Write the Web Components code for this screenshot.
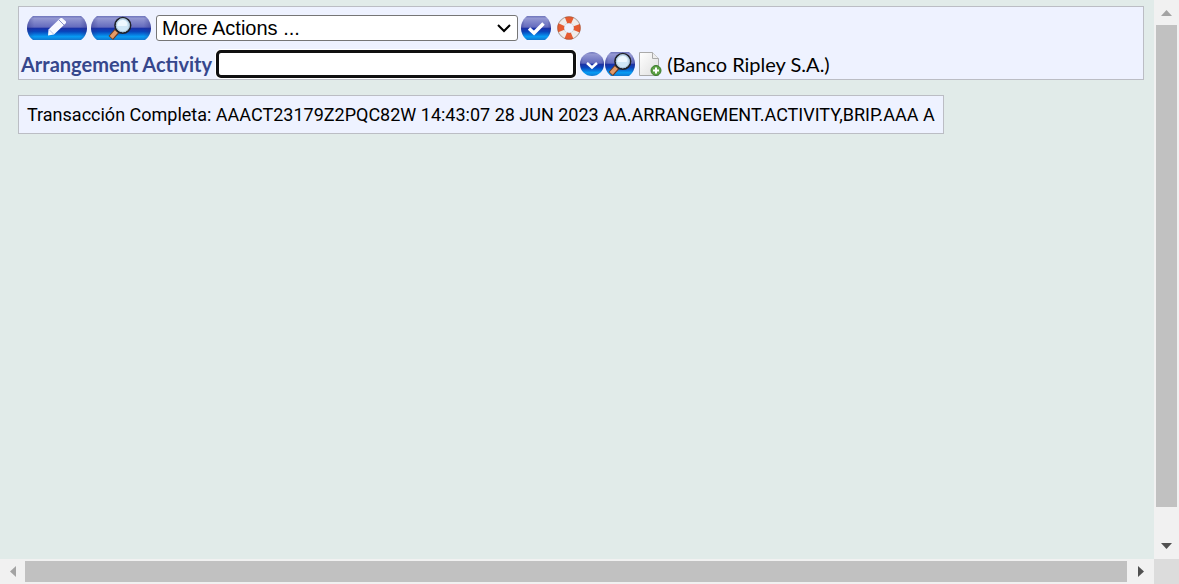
<!DOCTYPE html>
<html lang="es">
<head>
<meta charset="utf-8">
<title>Arrangement Activity</title>
<style>
html, body { height: 100%; margin: 0; }
body { overflow: hidden; background: #e1ebe9; color: #000; font: 20px/24px Lato, sans-serif; }
</style>
</head>
<body>
<app-window>
  <tool-panel>
    <action-bar slot="actions"></action-bar>
    <activity-field slot="field"></activity-field>
  </tool-panel>
  <status-message>Transacción Completa: AAACT23179Z2PQC82W 14:43:07 28 JUN 2023 AA.ARRANGEMENT.ACTIVITY,BRIP.AAA A</status-message>
</app-window>
<script>
const define = (name, html, init) => customElements.define(name, class extends HTMLElement {
  constructor() {
    super();
    this.attachShadow({ mode: 'open' }).innerHTML = html;
  }
  connectedCallback() { if (init) init(this, this.shadowRoot); }
});

const gradient = `<linearGradient id="g" x1="0" y1="0" x2="0" y2="1">
  <stop offset="0" stop-color="#6d74bb"/><stop offset=".1" stop-color="#9498d2"/><stop offset=".46" stop-color="#656cbe"/>
  <stop offset=".52" stop-color="#1a32a8"/><stop offset=".65" stop-color="#0846bd"/><stop offset=".86" stop-color="#079cf4"/><stop offset="1" stop-color="#1277cf"/></linearGradient>
  <linearGradient id="e"><stop offset="0" stop-color="#2a2f86" stop-opacity=".4"/><stop offset=".12" stop-color="#2a2f86" stop-opacity="0"/><stop offset=".88" stop-color="#2a2f86" stop-opacity="0"/><stop offset="1" stop-color="#2a2f86" stop-opacity=".4"/></linearGradient>`;
const pill = w => {
  const d = `M6 0H${w - 6}C${w - 3} 2 ${w} 7 ${w} 12S${w - 3} 22 ${w - 6} 24H6C3 22 0 17 0 12S3 2 6 0Z`;
  return `<path d="${d}" fill="url(#g)"/><path d="${d}" fill="url(#e)"/>`;
};
const lens = x => `<g transform="translate(${x} 0)">
  <path d="M9.500 14L6.500 17" stroke="#252525" stroke-width="3"/>
  <path d="M8 15L1.800 22" stroke="#6f3a20" stroke-width="6"/><path d="M7.400 15.500L2.200 21.400" stroke="#e39a68" stroke-width="4"/>
  <circle cx="13.800" cy="9.300" r="7.800" fill="#cfe7f7" stroke="#20232b" stroke-width="1.700"/>
  <circle cx="13.800" cy="9.300" r="6.500" fill="none" stroke="#a9c3d8" stroke-width="1"/>
  <path d="M8.500 10C8 6 11 4 14.500 4C18 5 19 8 17.500 10Z" fill="#eef8ff"/></g>`;
const icons = {
  edit: [60, pill(60) + `<path d="M21 19.500L21.500 13.500L32.500 3Q33 1.500 35 2L39 5.500Q39.500 7 38 8L27 18.500Z" fill="#f8f9ff"/><path d="M32 4l5 5" stroke="#8a92cc" stroke-width="1"/><path d="M22 13.500l4.500 4.500" stroke="#b5c0e6" stroke-width="1"/>`],
  view: [60, pill(60) + lens(18)],
  commit: [30, pill(30) + `<path d="M8 12.500L13 17L22.500 7.500" fill="none" stroke="#fff" stroke-width="3.500"/>`],
  help: [24, `<circle cx="12" cy="12" r="8.300" fill="none" stroke="#a8a8a8" stroke-width="7"/><circle cx="12" cy="12" r="8.200" fill="none" stroke="#eeeceb" stroke-width="6.300"/><circle cx="12" cy="12" r="8.300" fill="none" stroke="#e65c31" stroke-width="6.600" stroke-dasharray="6.600 6.438" stroke-dashoffset="3.300"/><circle cx="12" cy="12" r="11.200" fill="none" stroke="#87543d" stroke-opacity=".35"/>`],
  drop: [24, `<circle cx="12" cy="12" r="12" fill="url(#g)"/><circle cx="12" cy="12" r="12" fill="url(#e)"/><path d="M7 11L12 15.500L17 11" fill="none" stroke="#fff" stroke-width="2.500"/>`],
  search: [30, pill(30) + lens(4)],
  create: [24, `<defs><linearGradient id="p" x1="0" y1="0" x2="1" y2="1"><stop offset="0" stop-color="#fff"/><stop offset="1" stop-color="#dedede"/></linearGradient></defs><path d="M1.500 .5H14.500L20.500 6.500V23.500H1.500Z" fill="url(#p)" stroke="#aaa"/><path d="M14.500 .5V6.500H20.500" fill="#eee" stroke="#aaa"/><circle cx="18" cy="18.500" r="5" fill="#5ba043" stroke="#3a7a2c"/><path d="M18 15.500v6M15 18.500h6" stroke="#fff" stroke-width="2"/>`]
};

define('icon-button', `<style>
  :host { display: block; flex: none; }
  button { display: block; margin: 0; padding: 0; border: 0; background: none; cursor: pointer; }
  svg { display: block; overflow: hidden; }
</style><button type="button"></button>`, (el, root) => {
  const [w, art] = icons[el.getAttribute('icon')];
  const button = root.querySelector('button');
  button.setAttribute('aria-label', el.getAttribute('label'));
  button.innerHTML = `<svg width="${w}" height="24" viewBox="0 0 ${w} 24" aria-hidden="true"><defs>${gradient}</defs>${art}</svg>`;
});

define('action-bar', `<style>
  :host { display: flex; align-items: center; padding: 0 8px; }
  .tools { display: flex; gap: 4px; }
  .menu { position: relative; margin: 0 3px 0 5px; }
  select { display: block; box-sizing: border-box; width: 362px; height: 26px; padding: 0 24px 0 5px; border: 1px solid #767676; border-radius: 3px; background: #fff; color: #000; font: 20px/24px "Liberation Sans", Arial, sans-serif; appearance: none; }
  .menu svg { position: absolute; right: 7px; top: 8px; pointer-events: none; }
  .end { display: flex; gap: 6px; }
</style>
<div class="tools"><icon-button icon="edit" label="Edit"></icon-button><icon-button icon="view" label="View"></icon-button></div>
<div class="menu"><select aria-label="More Actions"><option>More Actions ...</option></select>
<svg width="14" height="10" viewBox="0 0 14 10"><path d="M1 2l6 6 6-6" fill="none" stroke="#000" stroke-width="2"/></svg></div>
<div class="end"><icon-button icon="commit" label="Commit"></icon-button><icon-button icon="help" label="Help"></icon-button></div>`);

define('activity-field', `<style>
  :host { display: flex; align-items: center; padding: 0 2px; }
  label { color: #36478c; font-weight: 700; white-space: nowrap; }
  input { box-sizing: border-box; width: 360px; height: 28px; margin: 0 4px; padding: 0 4px; border: 3px solid #101010; border-radius: 5px; outline: 0; background: #fff; box-shadow: 0 0 0 1px #fff; font: 20px "Liberation Sans", Arial, sans-serif; }
  .tools { display: flex; gap: 1px; }
  .tools icon-button:last-child { margin-left: 2px; }
  span { margin-left: 5px; white-space: nowrap; }
</style>
<label for="activity">Arrangement Activity</label><input id="activity" type="text">
<div class="tools"><icon-button icon="drop" label="Open list"></icon-button><icon-button icon="search" label="Search"></icon-button><icon-button icon="create" label="New"></icon-button></div>
<span>(Banco Ripley S.A.)</span>`);

define('tool-panel', `<style>
  :host { display: flex; flex-direction: column; gap: 9px; padding: 8px 0 1px; border: 1px solid #bbbdc4; background: #eef2ff; }
</style><slot name="actions"></slot><slot name="field"></slot>`);

define('status-message', `<style>
  :host { display: block; width: fit-content; margin-top: 15px; padding: 6px 8px; border: 1px solid #bbbdc4; background: #eef2ff; font: 18px/25px Roboto, sans-serif; white-space: nowrap; }
</style><slot></slot>`);

define('scroll-track', `<style>
  :host { display: flex; align-items: center; background: #f1f1f1; }
  :host([axis="y"]) { flex-direction: column; }
  .arrow { flex: none; display: grid; place-items: center; width: 25px; height: 25px; }
  :host([axis="y"]) .end { height: 27px; }
  :host([axis="x"]) .end { width: 27px; }
  .rail { flex: 1; display: flex; align-self: stretch; box-sizing: border-box; padding: 2px 0; }
  :host([axis="y"]) .rail { flex-direction: column; padding: 0 2px; }
  .thumb { flex: none; background: #c1c1c1; }
  :host([axis="y"]) .thumb { height: 95%; }
  :host([axis="x"]) .thumb { width: 100%; }
  svg { display: block; }
</style><div class="arrow start"></div><div class="rail"><div class="thumb"></div></div><div class="arrow end"></div>`, (el, root) => {
  const y = el.getAttribute('axis') === 'y';
  const box = y ? 'width="11" height="6" viewBox="0 0 11 6"' : 'width="6" height="11" viewBox="0 0 6 11"';
  root.querySelector('.start').innerHTML = `<svg ${box}><path fill="#a3a3a3" d="${y ? 'M0 6L5.500 0 11 6Z' : 'M6 0L0 5.500 6 11Z'}"/></svg>`;
  root.querySelector('.end').innerHTML = `<svg ${box}><path fill="#505050" d="${y ? 'M0 0L5.500 6 11 0Z' : 'M0 0L6 5.500 0 11Z'}"/></svg>`;
});

define('app-window', `<style>
  :host { display: grid; grid-template: minmax(0, 1fr) 25px / minmax(0, 1fr) 25px; height: 100%; }
  main { min-width: 0; overflow: hidden; padding: 6px 10px 0 18px; }
  .corner { background: #dcdcdc; }
</style><main><slot></slot></main><scroll-track axis="y"></scroll-track><scroll-track axis="x"></scroll-track><div class="corner"></div>`);
</script>
</body>
</html>
